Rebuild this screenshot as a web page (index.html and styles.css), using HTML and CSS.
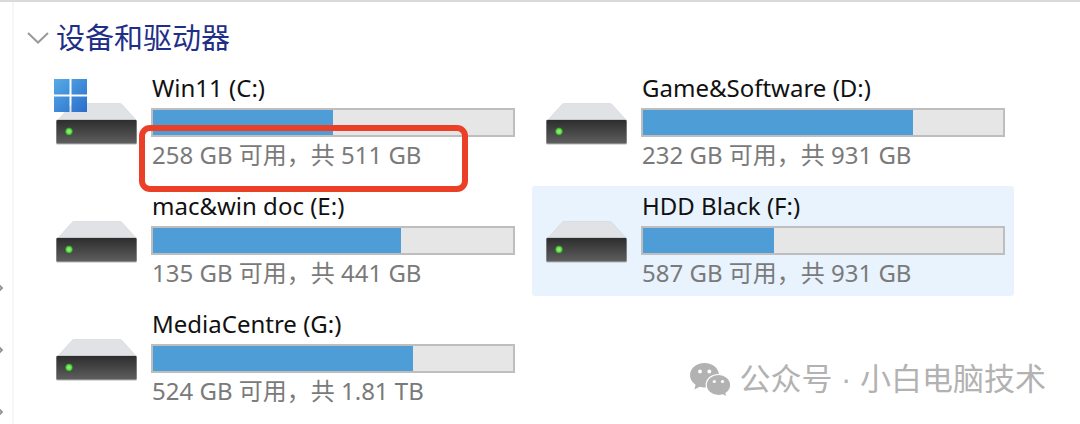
FILE: index.html
```html
<!DOCTYPE html>
<html lang="zh-CN">
<head>
    <meta charset="UTF-8">
    <meta name="viewport" content="width=device-width, initial-scale=1.0">
    <title>设备和驱动器</title>
    <link rel="stylesheet" href="styles.css">
</head>
<body>

<!-- shared icons -->
<svg class="defs" width="0" height="0" aria-hidden="true">
    <defs>
        <linearGradient id="front" x1="0" y1="0" x2="0" y2="1">
            <stop offset="0" stop-color="#2d2d2d"/>
            <stop offset="1" stop-color="#5e5e5e"/>
        </linearGradient>
        <radialGradient id="led">
            <stop offset="0" stop-color="#9bf58a"/>
            <stop offset="0.6" stop-color="#66e04c"/>
            <stop offset="1" stop-color="#2f7d22"/>
        </radialGradient>
        <linearGradient id="win" gradientUnits="userSpaceOnUse" x1="0" y1="0" x2="33" y2="33">
            <stop offset="0" stop-color="#55ace6"/>
            <stop offset="1" stop-color="#2b6ccb"/>
        </linearGradient>
        <symbol id="drive" viewBox="0 0 82 42">
            <path d="M18 0.5h46q1 0 2 1L80 17H2L16 1.500q1-1 2-1z" fill="#e1e2e6" stroke="#d6d7da" stroke-width="0.7"/>
            <rect x="0" y="16.500" width="81" height="25" rx="1.500" fill="#b5b5b5"/>
            <rect x="0.500" y="17" width="80" height="23.500" rx="1" fill="url(#front)"/>
            <circle cx="13" cy="28.500" r="3.900" fill="url(#led)"/>
        </symbol>
        <symbol id="chevron" viewBox="0 0 6 10">
            <path d="M1 1l4 4-4 4" fill="none" stroke="#8a8f94" stroke-width="1.800"/>
        </symbol>
    </defs>
</svg>

<div class="window">
    <nav class="sidebar" aria-label="导航">
        <svg class="chevron"><use href="#chevron"/></svg>
        <svg class="chevron"><use href="#chevron"/></svg>
        <svg class="chevron"><use href="#chevron"/></svg>
    </nav>

    <main class="content">
        <h1 class="group-title">
            <svg class="arrow" viewBox="0 0 22 12"><path d="M1 1l10 9.500L21 1" fill="none" stroke="#9a9a9a" stroke-width="2"/></svg>
            设备和驱动器
        </h1>

        <div class="drives">
            <div class="drive">
                <div class="icon">
                    <svg class="disk"><use href="#drive"/></svg>
                    <svg class="windows" viewBox="0 0 33 33"><path d="M0 0h15.500v15.500H0zM17.500 0H33v15.500H17.500zM0 17.500h15.500V33H0zM17.500 17.500H33V33H17.500z" fill="url(#win)"/></svg>
                </div>
                <div class="info">
                    <label class="name" for="drive-c">Win11 (C:)</label>
                    <progress class="bar" id="drive-c" value="255" max="511"></progress>
                    <p class="space">258 GB 可用，共 511 GB</p>
                    <div class="highlight"></div>
                </div>
            </div>

            <div class="drive">
                <div class="icon"><svg class="disk"><use href="#drive"/></svg></div>
                <div class="info">
                    <label class="name" for="drive-d">Game&amp;Software (D:)</label>
                    <progress class="bar" id="drive-d" value="697" max="931"></progress>
                    <p class="space">232 GB 可用，共 931 GB</p>
                </div>
            </div>

            <div class="drive">
                <div class="icon"><svg class="disk"><use href="#drive"/></svg></div>
                <div class="info">
                    <label class="name" for="drive-e">mac&amp;win doc (E:)</label>
                    <progress class="bar" id="drive-e" value="304" max="441"></progress>
                    <p class="space">135 GB 可用，共 441 GB</p>
                </div>
            </div>

            <div class="drive active">
                <div class="icon"><svg class="disk"><use href="#drive"/></svg></div>
                <div class="info">
                    <label class="name" for="drive-f">HDD Black (F:)</label>
                    <progress class="bar" id="drive-f" value="339" max="931"></progress>
                    <p class="space">587 GB 可用，共 931 GB</p>
                </div>
            </div>

            <div class="drive">
                <div class="icon"><svg class="disk"><use href="#drive"/></svg></div>
                <div class="info">
                    <label class="name" for="drive-g">MediaCentre (G:)</label>
                    <progress class="bar" id="drive-g" value="1339" max="1853"></progress>
                    <p class="space">524 GB 可用，共 1.81 TB</p>
                </div>
            </div>
        </div>
    </main>

    <div class="watermark">
        <svg class="wechat" viewBox="0 0 41 34">
            <path d="M14.500 0C6.500 0 0 5.400 0 12.200c0 3.900 2.100 7.200 5.500 9.500L4.500 26.500l5.200-2.800c1.500.4 3.100.7 4.800.7C22.500 24.400 29 19 29 12.200S22.500 0 14.500 0z" fill="#b2b2b2"/>
            <path d="M28.500 11.500c-6.900 0-12.300 4.700-12.300 10.500s5.400 10.500 12.300 10.500c1.500 0 2.900-.2 4.200-.6l4.300 2.100-1-3.800c2.900-1.900 4.700-4.900 4.700-8.200 0-5.800-5.300-10.500-12.200-10.500z" fill="#b2b2b2" stroke="#fff" stroke-width="1.200"/>
            <g fill="#fff">
                <circle cx="10" cy="8.500" r="1.900"/>
                <circle cx="19.300" cy="8.500" r="1.900"/>
                <circle cx="24.300" cy="18.500" r="1.600"/>
                <circle cx="32.500" cy="18.500" r="1.600"/>
            </g>
        </svg>
        <span>公众号 · 小白电脑技术</span>
    </div>
</div>

</body>
</html>
```
FILE: styles.css
```css
*{
    margin: 0;
    padding: 0;
    box-sizing: border-box;
}
body{
    font-family: "Noto Sans", "Noto Sans CJK SC", sans-serif;
    background-color: #fff;
    color: #111;
}
.defs{
    position: absolute;
}
.window{
    position: relative;
    display: flex;
    min-height: 100vh;
    border-top: 2px solid #dadada;
}

/* left edge */
.sidebar{
    display: flex;
    flex-direction: column;
    justify-content: flex-end;
    gap: 52px;
    width: 14px;
    padding-bottom: 7px;
    border-right: 2px solid #f7f7f7;
    overflow: hidden;
}
.chevron{
    flex: none;
    width: 6px;
    height: 10px;
    margin-left: -3px;
}

.content{
    flex: 1;
    padding: 16px 0 8px 28px;
}
.group-title{
    display: flex;
    align-items: center;
    gap: 7px;
    height: 40px;
    margin: 0 0 10px -15px;
    font-size: 29px;
    font-weight: 400;
    line-height: 40px;
    color: #1f2f87;
}
.arrow{
    width: 22px;
    height: 12px;
}

/* drive tiles */
.drives{
    display: grid;
    grid-template-columns: repeat(auto-fill, 482px);
    gap: 8px;
}
.drive{
    display: flex;
    height: 110px;
    padding: 4px 9px 4px 14px;
    border-radius: 3px;
}
.drive.active{
    background-color: #e8f3fe;
}
.icon{
    position: relative;
    flex: none;
    width: 95px;
    padding-top: 31px;
}
.disk{
    display: block;
    width: 82px;
    height: 42px;
}
.windows{
    position: absolute;
    top: 7px;
    left: -2px;
    width: 33px;
    height: 33px;
}
.info{
    position: relative;
    flex: 1;
}
.name{
    display: block;
    padding-left: 1px;
    font-size: 24px;
    line-height: 32px;
    white-space: nowrap;
}
.bar{
    display: block;
    width: 100%;
    height: 29px;
    margin: 4px 0 2px;
    border: 2px solid #bebebe;
    background-color: #e6e6e6;
    appearance: none;
    -webkit-appearance: none;
}
.bar::-webkit-progress-bar{
    background-color: #e6e6e6;
}
.bar::-webkit-progress-value{
    background-color: #4f9dd6;
}
.space{
    padding-left: 1px;
    font-size: 24px;
    line-height: 32px;
    color: #7a7a7a;
    white-space: nowrap;
}
.highlight{
    position: absolute;
    top: 53px;
    left: -12px;
    width: 329px;
    height: 67px;
    border: 6px solid #eb4027;
    border-radius: 11px;
}

.watermark{
    position: absolute;
    right: 34px;
    bottom: 24px;
    display: flex;
    align-items: center;
    gap: 8px;
    font-family: "Liberation Sans", "Noto Sans CJK SC", sans-serif;
    font-size: 31px;
    line-height: 40px;
    color: #b2b2b2;
}
.wechat{
    width: 41px;
    height: 34px;
}
```
